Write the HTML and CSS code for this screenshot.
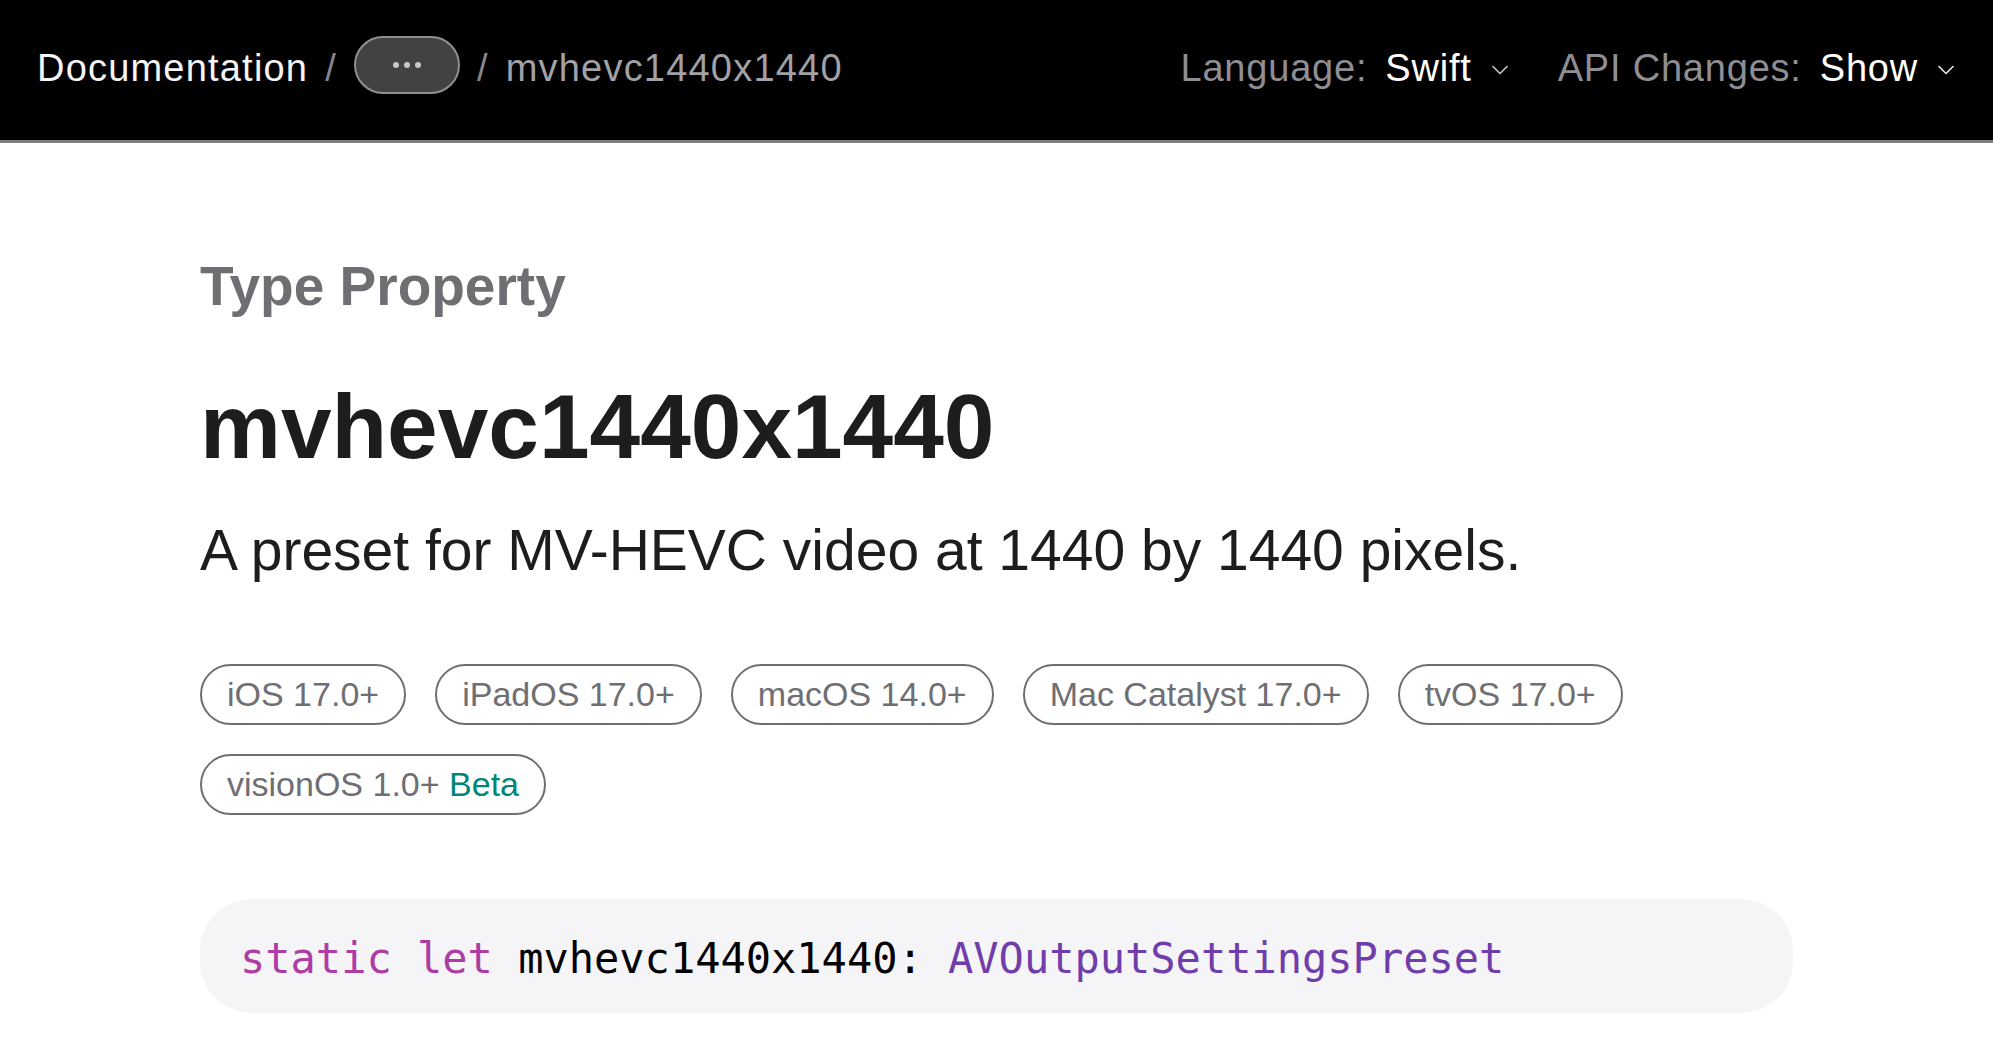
FILE: index.html
```html
<!DOCTYPE html>
<html lang="en">
<head>
<meta charset="utf-8">
<title>mvhevc1440x1440 | Apple Developer Documentation</title>
<link rel="stylesheet" href="styles.css">
</head>
<body>
<header class="nav">
  <nav class="crumbs">
    <span class="crumb">Documentation</span>
    <span class="sep">/</span>
    <span class="more"><i></i><i></i><i></i></span>
    <span class="sep">/</span>
    <span class="crumb current">mvhevc1440x1440</span>
  </nav>
  <div class="toggles">
    <div class="toggle">
      <span class="label">Language:</span>
      <span class="value">Swift</span>
      <svg class="chev" width="16" height="10" viewBox="0 0 16 10"><path d="M1 1.5 L8 8.5 L15 1.5" fill="none" stroke="#c7c7cc" stroke-width="1.6" stroke-linecap="round" stroke-linejoin="round"/></svg>
    </div>
    <div class="toggle">
      <span class="label">API Changes:</span>
      <span class="value">Show</span>
      <svg class="chev" width="16" height="10" viewBox="0 0 16 10"><path d="M1 1.5 L8 8.5 L15 1.5" fill="none" stroke="#e8e8ed" stroke-width="1.6" stroke-linecap="round" stroke-linejoin="round"/></svg>
    </div>
  </div>
</header>
<main class="doc">
  <div class="eyebrow">Type Property</div>
  <h1 class="title">mvhevc1440x1440</h1>
  <p class="abstract">A preset for MV-HEVC video at 1440 by 1440 pixels.</p>
  <ul class="platforms">
    <li class="platform">iOS 17.0+</li>
    <li class="platform">iPadOS 17.0+</li>
    <li class="platform">macOS 14.0+</li>
    <li class="platform">Mac Catalyst 17.0+</li>
    <li class="platform">tvOS 17.0+</li>
    <li class="platform">visionOS 1.0+ <span class="beta">Beta</span></li>
  </ul>
  <pre class="decl"><code><span class="kw">static</span> <span class="kw">let</span> mvhevc1440x1440: <span class="type">AVOutputSettingsPreset</span></code></pre>
</main>
</body>
</html>
```

FILE: styles.css
```css
html, body {
  margin: 0;
  padding: 0;
  background: #ffffff;
}

body {
  font-family: "Liberation Sans", Arial, sans-serif;
  color: #1d1d1f;
  overflow: hidden;
}

/* ---------- top navigation ---------- */
.nav {
  box-sizing: border-box;
  height: 143px;
  background: #000000;
  border-bottom: 3px solid #7d7d80;
  padding: 0 39px 4px 37px;
  display: flex;
  align-items: center;
  justify-content: space-between;
  font-size: 38px;
  letter-spacing: 1.2px;
  line-height: 46px;
}

.crumbs {
  display: flex;
  align-items: center;
}

.crumb {
  color: #f5f5f7;
}

.crumb.current {
  color: #a1a1a6;
}

.sep {
  color: #86868b;
  margin: 0 17px;
}

.more {
  box-sizing: border-box;
  width: 106px;
  height: 58px;
  border-radius: 29px;
  background: #424245;
  border: 2px solid #8e8e93;
  display: flex;
  align-items: center;
  justify-content: center;
  gap: 5px;
  margin-bottom: 6px;
}

.more i {
  display: block;
  width: 6px;
  height: 6px;
  border-radius: 50%;
  background: #c7c7cc;
}

.toggles {
  display: flex;
  align-items: center;
  gap: 50px;
  letter-spacing: 0.8px;
}

.toggle {
  display: flex;
  align-items: center;
}

.label {
  color: #8e8e93;
  margin-right: 18px;
}

.value {
  color: #ffffff;
  margin-right: 20px;
}

.chev {
  display: block;
  margin-top: 4px;
}

/* ---------- content ---------- */
.doc {
  padding: 111px 200px 0 200px;
}

.eyebrow {
  font-size: 55px;
  line-height: 64px;
  font-weight: 700;
  color: #6e6e73;
}

.title {
  margin: 57px 0 0 0;
  font-size: 91px;
  line-height: 104px;
  font-weight: 700;
  color: #1d1d1f;
}

.abstract {
  margin: 37px 0 0 0;
  font-size: 57px;
  line-height: 68px;
  color: #1d1d1f;
}

.platforms {
  list-style: none;
  margin: 80px 0 0 0;
  padding: 0;
  display: flex;
  flex-wrap: wrap;
  gap: 29px;
}

.platform {
  box-sizing: border-box;
  height: 61px;
  padding: 0 25px;
  border: 2px solid #6e6e73;
  border-radius: 31px;
  font-size: 34px;
  line-height: 57px;
  color: #6e6e73;
  white-space: nowrap;
}

.beta {
  color: #008578;
}

.decl {
  box-sizing: border-box;
  margin: 84px 0 0 0;
  height: 114px;
  padding: 36px 42px 0 40px;
  background: #f5f5f7;
  border-radius: 52px;
  font-family: "Liberation Mono", "DejaVu Sans Mono", monospace;
  font-size: 42px;
  line-height: 48px;
  color: #000000;
}

.kw {
  color: #ad3da4;
}

.type {
  color: #703daa;
}
```
